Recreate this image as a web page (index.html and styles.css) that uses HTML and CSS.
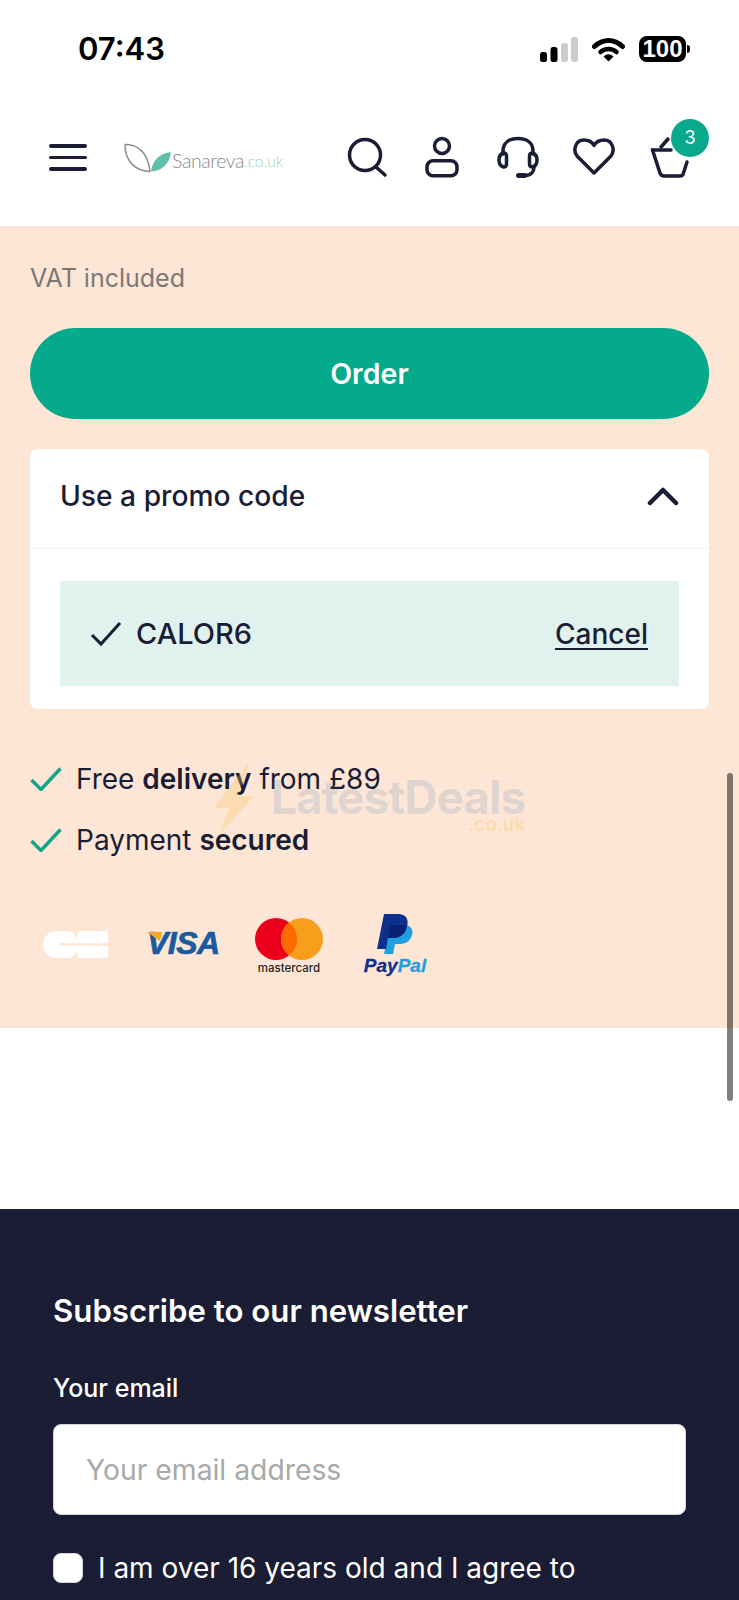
FILE: index.html
```html
<!DOCTYPE html>
<html lang="en">
<head>
<meta charset="utf-8">
<title>Sanareva basket</title>
<link rel="stylesheet" href="styles.css">
</head>
<body>
<div class="page">
  <div class="status">
    <span class="time">07:43</span>
    <div class="status-icons">
      <svg class="signal" width="38" height="26" viewBox="0 0 38 26"><rect x="0" y="15" width="7" height="10" rx="2.5" fill="#000"/><rect x="10.500" y="10" width="7" height="15" rx="2.500" fill="#000"/><rect x="21" y="6" width="7" height="19" rx="2.500" fill="#ccc"/><rect x="31" y="0" width="7" height="25" rx="2.500" fill="#ccc"/></svg>
      <svg class="wifi" width="33" height="25" viewBox="0 0 33 25"><path d="M2.500 9.500C11 1.500 22 1.500 30.500 9.500" fill="none" stroke="#000" stroke-width="5" stroke-linecap="round"/><path d="M8.500 15C13 11 20 11 24.500 15" fill="none" stroke="#000" stroke-width="4.500" stroke-linecap="round"/><path d="M11.500 19.500Q16.500 15 21.500 19.500L16.500 24.500Z" fill="#000"/></svg>
      <div class="battery"><span class="battery-body">100</span><span class="battery-nub"></span></div>
    </div>
  </div>
  <header class="header">
    <div class="header-left">
      <div class="burger"><span></span><span></span><span></span></div>
      <div class="logo">
        <svg width="50" height="30" viewBox="0 0 50 30"><path d="M1 1.500C14 1 24 10 26 28.500C12 28 1 19 1 1.500Z" fill="none" stroke="#8f8f90" stroke-width="1.500"/><path d="M27 28.500C28 17 37 10 47 9C46 20 38 28.500 27 28.500Z" fill="#5fc1ab"/></svg>
        <span class="logo-name">Sanareva</span><span class="logo-tld">.co.uk</span>
      </div>
    </div>
    <nav class="header-icons">
      <div class="slot"><svg width="44" height="44" viewBox="0 0 44 44"><circle cx="21" cy="19" r="15.500" class="line"/><path d="M32 31L41 39" class="line"/></svg></div>
      <div class="slot"><svg width="36" height="44" viewBox="0 0 36 44"><circle cx="18" cy="10" r="7.500" class="line"/><rect x="3" y="24.700" width="30" height="15" rx="6" class="line"/></svg></div>
      <div class="slot"><svg width="44" height="44" viewBox="0 0 44 44"><path d="M7 18V15C7 7 13 2.500 22 2.500S37 7 37 15V18" class="line"/><path d="M7.500 17C4.500 18 3 21 3 24S4.500 30 7.500 31C9.500 31 10.500 30 10.500 28V20C10.500 18 9.500 17 7.500 17Z" class="line"/><path d="M36.500 17C39.500 18 41 21 41 24S39.500 30 36.500 31C34.500 31 33.500 30 33.500 28V20C33.500 18 34.500 17 36.500 17Z" class="line"/><path d="M38 31C38 36 35 39.500 29 39.500" class="line"/><rect x="20" y="37" width="11" height="5" rx="2.500" fill="#1a1d33"/></svg></div>
      <div class="slot"><svg width="44" height="44" viewBox="0 0 44 44"><path d="M22 37L5.500 20.500C0.500 15 3 4 12 4C16.500 4 20 6 22 9.500C24 6 27.500 4 32 4C41 4 43.500 15 38.500 20.500Z" class="line"/></svg></div>
      <div class="slot cart">
        <svg width="40" height="44" viewBox="0 0 40 44"><path d="M2.500 14H21" class="line"/><path d="M2.500 14L10 37Q11 40 14 40H30Q33 40 33.500 37L37 26" class="line"/><path d="M11 11L18 3" class="line"/></svg>
        <span class="badge">3</span>
      </div>
    </nav>
  </header>
  <main class="checkout">
    <p class="vat">VAT included</p>
    <button class="order">Order</button>
    <section class="promo">
      <div class="promo-head">
        <span>Use a promo code</span>
        <svg width="32" height="20" viewBox="0 0 32 20"><path d="M3 17L16 4L29 17" fill="none" stroke="#1a1d33" stroke-width="4.500" stroke-linecap="round" stroke-linejoin="round"/></svg>
      </div>
      <div class="promo-body">
        <div class="promo-applied">
          <div class="promo-code">
            <svg width="32" height="26" viewBox="0 0 32 26"><path d="M2 14L11 23L30 2" fill="none" stroke="#1a1d33" stroke-width="3"/></svg>
            <span>CALOR6</span>
          </div>
          <a class="cancel">Cancel</a>
        </div>
      </div>
    </section>
    <ul class="perks">
      <li><svg width="32" height="24" viewBox="0 0 32 24"><path d="M1.500 13L11 22.500L30.500 1.500" class="tick"/></svg><span>Free <b>delivery</b> from £89</span></li>
      <li><svg width="32" height="24" viewBox="0 0 32 24"><path d="M1.500 13L11 22.500L30.500 1.500" class="tick"/></svg><span>Payment <b>secured</b></span></li>
    </ul>
    <div class="payments">
      <svg class="cb" width="66" height="27" viewBox="0 0 66 27"><path d="M13.500 0H24C29 0 32 3 33 7H36V12.300H17V14.700H36V20H33C32 24 29 27 24 27H13.500A13.500 13.500 0 0 1 13.500 0Z" fill="#fff"/><path d="M35 0H62A3 3 0 0 1 65 3V9.300A3 3 0 0 1 62 12.300H34V7C34.500 4 34.500 2 35 0Z" fill="#fff"/><path d="M34 14.700H62A3 3 0 0 1 65 17.700V24A3 3 0 0 1 62 27H35C34.500 25 34.500 23 34 20Z" fill="#fff"/></svg>
      <div class="visa"><span class="visa-flag"></span>VISA</div>
      <div class="mc">
        <svg width="68" height="42" viewBox="0 0 68 42"><circle cx="21" cy="21" r="21" fill="#eb001b"/><circle cx="47" cy="21" r="21" fill="#f79e1b"/><path d="M34 4.500A21 21 0 0 1 34 37.500A21 21 0 0 1 34 4.500Z" fill="#ff6a00"/></svg>
        <span>mastercard</span>
      </div>
      <div class="pp">
        <svg width="36" height="41" viewBox="0 0 36 41"><path d="M13 11H27C33 11 37 15 35 21C33 28 28 30 22 30H18L16 40H7Z" fill="#1e9fe0"/><path d="M7 0H21C29 0 32 5 30 13C28 21 22 24 15 24H11L9 35H0Z" fill="#0f2f8c"/><path d="M13 11H28C29 14 29 17 27 19C24 23 20 24 15 24H11Z" fill="#0b2272"/></svg>
        <span class="pp-word"><span class="pp-dark">Pay</span><span class="pp-light">Pal</span></span>
      </div>
    </div>
  </main>
  <div class="gap"></div>
  <footer class="footer">
    <h2>Subscribe to our newsletter</h2>
    <label class="email-label" for="email">Your email</label>
    <input class="email" id="email" type="email" placeholder="Your email address">
    <div class="consent"><span class="box"></span><span>I am over 16 years old and I agree to</span></div>
  </footer>
  <div class="watermark" aria-hidden="true">
    <svg width="40" height="74" viewBox="0 0 40 74"><path d="M36 0L0 48H15L6 74L40 36H24Z" fill="#f9c55a" opacity=".3"/></svg>
    <div class="wm-text"><span class="wm-name">LatestDeals</span><span class="wm-tld">.co.uk</span></div>
  </div>
  <div class="scrollbar"></div>
</div>
</body>
</html>
```
FILE: styles.css
```css
* { box-sizing: border-box; }
html, body { margin: 0; padding: 0; background: #fff; }
body { font-family: Inter, "Liberation Sans", sans-serif; color: #1a1d33; }
.page { position: relative; width: 739px; height: 1600px; overflow: hidden; }

.status { height: 90px; display: flex; justify-content: space-between; align-items: flex-start; padding: 30px 49px 0 78px; }
.time { font-size: 31px; font-weight: 600; line-height: 38px; color: #000; }
.status-icons { display: flex; align-items: flex-start; padding-top: 6px; }
.signal { margin-top: 1px; margin-right: 14px; }
.wifi { margin-top: 1px; margin-right: 14px; }
.battery { display: flex; align-items: center; }
.battery-body { width: 47px; height: 26px; border-radius: 8px; background: #000; color: #fff; font-family: "Liberation Sans", sans-serif; font-weight: 700; font-size: 24px; line-height: 26px; text-align: center; }
.battery-nub { width: 3px; height: 8px; background: #000; border-radius: 0 3px 3px 0; margin-left: 1px; }

.header { height: 136px; display: flex; justify-content: space-between; padding: 46px 31px 0 49px; }
.header-left { display: flex; gap: 37px; align-items: flex-start; }
.burger { width: 38px; display: flex; flex-direction: column; gap: 8px; padding-top: 8px; }
.burger span { height: 3.500px; background: #1a1d33; border-radius: 2px; }
.logo { display: flex; align-items: flex-end; height: 31px; margin-top: 7px; }
.logo svg { margin-bottom: 1px; }
.logo-name { font-family: Lato, sans-serif; font-weight: 300; font-size: 19.500px; letter-spacing: -0.400px; line-height: 26px; color: #87878a; margin-left: -2px; }
.logo-tld { font-family: Lato, sans-serif; font-weight: 300; font-size: 15.500px; line-height: 25px; color: #8fd3c6; }
.header-icons { display: flex; align-items: flex-start; }
.slot { width: 76px; height: 44px; display: flex; justify-content: center; }
.line { fill: none; stroke: #1a1d33; stroke-width: 3.500; stroke-linecap: round; stroke-linejoin: round; }
.cart { position: relative; }
.badge { position: absolute; left: 39px; top: -17px; width: 38px; height: 38px; border-radius: 50%; background: #0aa98b; color: #fff; font-size: 18px; line-height: 38px; text-align: center; }

.checkout { height: 802px; background: #fee6d7; border-top: 2px solid #f7e3d7; padding: 0 30px; }
.vat { margin: 0; padding-top: 32px; height: 100px; font-size: 25px; line-height: 36px; color: #7b7875; }
.order { display: block; width: 679px; height: 91px; border: 0; border-radius: 46px; background: #05a98b; color: #fff; font: 600 28.500px Inter, sans-serif; }
.promo { margin-top: 30px; background: #fff; border-radius: 8px; height: 260px; }
.promo-head { height: 100px; border-bottom: 1.500px solid #f3f3f3; display: flex; justify-content: space-between; align-items: center; padding: 0 30px 6px; font-size: 28.200px; font-weight: 500; }
.promo-body { padding: 32px 30px 0; }
.promo-applied { height: 105px; background: #e1f1ed; display: flex; justify-content: space-between; align-items: center; padding: 0 31px 0 30px; font-size: 28px; font-weight: 500; }
.promo-code { display: flex; align-items: center; gap: 14px; font-size: 29px; }
.cancel { text-decoration: underline; text-underline-offset: 4px; }
.perks { list-style: none; margin: 39px 0 0; padding: 0; font-size: 28px; }
.perks li { display: flex; align-items: center; gap: 14px; height: 61px; }
.perks b { font-weight: 600; }
.tick { fill: none; stroke: #14a586; stroke-width: 3.500; }
.payments { position: relative; height: 100px; margin-top: 31px; display: flex; align-items: flex-start; padding-left: 13px; }
.cb { margin-top: 30px; }
.visa { position: relative; margin: 24px 0 0 38px; width: 72px; font-family: "Liberation Sans", sans-serif; font-style: italic; font-weight: 700; font-size: 32px; line-height: 36px; color: #1a5b9e; letter-spacing: -0.500px; -webkit-text-stroke: 0.700px #1a5b9e; }
.visa-flag { position: absolute; left: 0; top: 7px; width: 15px; height: 9px; background: #f7a823; clip-path: polygon(0 0, 100% 0, 85% 100%); }
.mc { margin: 17px 0 0 36px; width: 68px; display: flex; flex-direction: column; align-items: center; }
.mc svg { flex: none; }
.mc span { font-size: 11.500px; font-weight: 500; line-height: 16px; white-space: nowrap; color: #231f20; }
.pp { margin: 13px 0 0 41px; width: 62px; display: flex; flex-direction: column; align-items: center; }
.pp-word { font-family: "Liberation Sans", sans-serif; font-style: italic; font-weight: 700; font-size: 19px; line-height: 22px; -webkit-text-stroke: 0.300px #0f2f8c; }
.pp-dark { color: #0f2f8c; }
.pp-light { color: #1e9fe0; -webkit-text-stroke: 0.300px #1e9fe0; }

.gap { height: 181px; }
.footer { height: 391px; background: #1a1d33; color: #fff; padding: 76px 53px 0; }
.footer h2 { margin: 0; font-size: 31.200px; line-height: 52px; font-weight: 600; }
.email-label { display: block; margin-top: 33px; font-size: 25px; line-height: 36px; font-weight: 500; }
.email { display: block; width: 633px; height: 91px; margin-top: 18px; border: 1px solid #d5d5dc; border-radius: 8px; background: #fff; padding: 0 32px; font: 28.300px Inter, sans-serif; }
.email::placeholder { color: #a9a9a9; opacity: 1; }
.consent { display: flex; align-items: center; gap: 15px; margin-top: 38px; font-size: 28px; line-height: 30px; }
.box { width: 30px; height: 30px; background: #fff; border-radius: 8px; border: 1px solid #d5d5dc; flex: none; }

.watermark { position: absolute; left: 214px; top: 760px; display: flex; gap: 17px; align-items: flex-start; }
.wm-text { display: flex; flex-direction: column; align-items: flex-end; padding-top: 15px; }
.wm-name { font-size: 46px; line-height: 44px; font-weight: 700; letter-spacing: -1px; color: rgba(130, 160, 185, .25); }
.wm-tld { font-size: 19px; line-height: 20px; margin-top: -4px; font-weight: 600; color: rgba(249, 197, 90, .35); }
.scrollbar { position: absolute; left: 727px; top: 773px; width: 6px; height: 328px; border-radius: 3px; background: rgba(0, 0, 0, .5); }
```
